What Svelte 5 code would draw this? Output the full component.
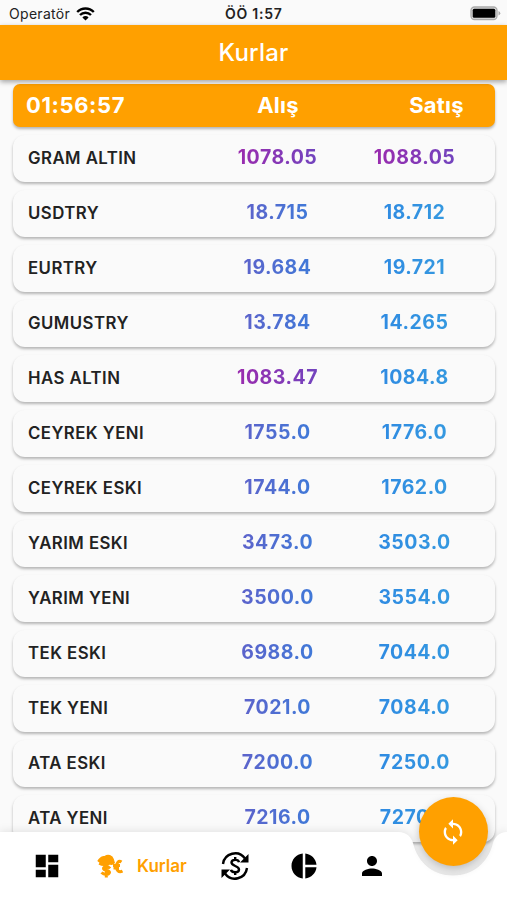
<script>
	const rates = [
		{ name: 'GRAM ALTIN', buy: '1078.05', sell: '1088.05' },
		{ name: 'USDTRY', buy: '18.715', sell: '18.712' },
		{ name: 'EURTRY', buy: '19.684', sell: '19.721' },
		{ name: 'GUMUSTRY', buy: '13.784', sell: '14.265' },
		{ name: 'HAS ALTIN', buy: '1083.47', sell: '1084.8' },
		{ name: 'CEYREK YENI', buy: '1755.0', sell: '1776.0' },
		{ name: 'CEYREK ESKI', buy: '1744.0', sell: '1762.0' },
		{ name: 'YARIM ESKI', buy: '3473.0', sell: '3503.0' },
		{ name: 'YARIM YENI', buy: '3500.0', sell: '3554.0' },
		{ name: 'TEK ESKI', buy: '6988.0', sell: '7044.0' },
		{ name: 'TEK YENI', buy: '7021.0', sell: '7084.0' },
		{ name: 'ATA ESKI', buy: '7200.0', sell: '7250.0' },
		{ name: 'ATA YENI', buy: '7216.0', sell: '7270.0' }
	];
</script>

<div class="screen">
	<div class="status">
		<div class="carrier">
			<span>Operatör</span>
			<svg width="19" height="14" viewBox="0 0 19 14">
				<path d="M1.2 5a11.7 11.7 0 0 1 16.6 0" />
				<path d="M4 8a7.8 7.8 0 0 1 11 0" />
				<path class="fill" d="M9.5 13.5 6.4 10.4a4.4 4.4 0 0 1 6.2 0z" />
			</svg>
		</div>
		<span class="clock">ÖÖ 1:57</span>
		<div class="power">
			<svg width="31" height="15" viewBox="0 0 31 15">
				<rect x="1" y="1" width="26" height="12.5" rx="3.5" fill="#ddd" stroke="#aaa" stroke-width="1.3" />
				<rect x="2.7" y="2.7" width="22.6" height="9.1" rx="1.5" fill="#000" />
				<path d="M28.5 5v4.5q1.8-.8 1.8-2.2T28.5 5z" fill="#aaa" />
			</svg>
		</div>
	</div>

	<header>Kurlar</header>

	<main>
		<div class="row head">
			<span class="time">01:56:57</span>
			<span class="col">Alış</span>
			<span class="col last">Satış</span>
		</div>
		{#each rates as r (r.name)}
			<div class="row card">
				<span class="name">{r.name}</span>
				<span class="value buy" class:wide={r.buy.length > 6}><b>{r.buy}</b></span>
				<span class="value sell" class:wide={r.sell.length > 6}><b>{r.sell}</b></span>
			</div>
		{/each}
	</main>

	<nav>
		<svg class="notch" width="507" height="70" viewBox="0 0 507 70">
			<path
				d="M0 2H398C407 2 411 7 413 13C418 33 433 45.5 453 45.5S488 33 493 13C495 7 499 2 507 2V70H0z"
				fill="#fff"
			/>
		</svg>
		<div class="items">
			<svg class="icon" viewBox="0 0 24 24"
				><path d="M3 13h8V3H3v10zm0 8h8v-6H3v6zm10 0h8V11h-8v10zm0-18v6h8V3h-8z" /></svg
			>
			<div class="active">
				<svg width="26" height="24" viewBox="0 0 26 24">
					<path
						d="M.3 7Q1.5 4.500 3.200 3.500Q4.800 1.500 7.500 2Q10 0 13 1Q16 2 16.800 5L18 9Q15 12 13 10.500Q11 12.500 8 12Q5 12.500 1.500 10.500L2.500 8.800z"
					/>
					<path
						class="line"
						d="M13 14.500C11 12 6 12.500 6.500 15C7 17 12.500 16 12.500 18.500C12 21 7 21 4.500 18.500M9.300 11V23.500"
					/>
					<path
						class="line"
						d="M24.500 8C21.500 6 19.500 9 19.500 12.500S21.500 19 25.500 17M16 11.500H23M16.500 14H22"
					/>
				</svg>
				<span>Kurlar</span>
			</div>
			<svg class="exchange" width="28" height="28" viewBox="0 0 28 28">
				<path d="M2 12A12.2 12.2 0 0 1 24 6.5M26 16A12.2 12.2 0 0 1 4 21.5" />
				<path d="M18 10.3C17.5 7 10.5 7 10.5 10.6S18 13.8 18 17.4S10.5 21 10 17.7M14.2 5V8.5M14.2 19.5V23" />
				<path class="fill" d="M27.5 2V10.5H19zM.5 26V17.5H9z" />
			</svg>
			<svg class="icon pie" viewBox="0 0 24 24"
				><path d="M11 2v20c-5.070-.5-9-4.790-9-10s3.930-9.500 9-10zm2.030 0v8.990H22c-.47-4.740-4.240-8.520-8.970-8.990zm0 11.010V22c4.740-.47 8.500-4.250 8.970-8.990h-8.970z" /></svg
			>
			<svg class="icon" viewBox="0 0 24 24"
				><path d="M12 12c2.210 0 4-1.790 4-4s-1.790-4-4-4-4 1.790-4 4 1.790 4 4 4zm0 2c-2.670 0-8 1.340-8 4v2h16v-2c0-2.660-5.330-4-8-4z" /></svg
			>
		</div>
	</nav>

	<button class="refresh" aria-label="Yenile">
		<svg width="28" height="28" viewBox="0 0 24 24"
			><path d="M12 4V1L8 5l4 4V6c3.310 0 6 2.690 6 6 0 1.010-.25 1.970-.7 2.800l1.460 1.460C19.540 15.030 20 13.570 20 12c0-4.420-3.580-8-8-8zm0 14c-3.310 0-6-2.690-6-6 0-1.010.25-1.970.7-2.800L5.240 7.740C4.460 8.970 4 10.430 4 12c0 4.420 3.580 8 8 8v3l4-4-4-4v3z" /></svg
		>
	</button>
</div>

<style>
	:global(body) {
		overflow: hidden;
	}

	.screen {
		position: relative;
		display: flex;
		flex-direction: column;
		width: 507px;
		height: 900px;
		overflow: hidden;
		background: #fafafa;
		font-family: Inter, 'Liberation Sans', sans-serif;
	}

	.status {
		display: grid;
		grid-template-columns: 216px auto 1fr;
		align-items: center;
		flex: none;
		height: 25px;
		padding: 2px 6px 0 9px;
		box-sizing: border-box;
		font-size: 14px;
		color: #222;
	}

	.carrier {
		display: flex;
		align-items: center;
		gap: 6px;
		letter-spacing: 0.3px;
	}

	.carrier svg {
		fill: none;
		stroke: #000;
		stroke-width: 2.4;
	}

	.carrier .fill {
		fill: #000;
		stroke: none;
	}

	.clock {
		font-weight: 600;
		letter-spacing: 0.75px;
	}

	.power {
		display: flex;
		justify-content: flex-end;
	}

	header {
		z-index: 1;
		flex: none;
		height: 55px;
		line-height: 56px;
		text-align: center;
		font-size: 24px;
		font-weight: 500;
		letter-spacing: 0.2px;
		color: #fff;
		background: #ffa000;
		box-shadow: 0 2px 5px rgba(0, 0, 0, 0.35);
	}

	main {
		display: flex;
		flex-direction: column;
		gap: 8px;
		padding: 4px 12px 0 13px;
	}

	.row {
		display: grid;
		grid-template-columns: 196px 137px 137px 12px;
		align-items: center;
		flex: none;
		box-shadow: 0 2px 3px rgba(0, 0, 0, 0.28);
	}

	.head {
		height: 42.5px;
		border-radius: 7px;
		background: #ffa000;
		color: #fff;
		font-size: 22px;
		font-weight: 700;
	}

	.time {
		padding-left: 13px;
		letter-spacing: 0.6px;
	}

	.col {
		padding-left: 1px;
		text-align: center;
		letter-spacing: 0.2px;
	}

	.last {
		padding-left: 44px;
	}

	.card {
		height: 47px;
		border-radius: 12px;
		background: #fafafa;
	}

	.name {
		padding: 0 0 1px 15px;
		font-size: 16.8px;
		font-weight: 600;
		letter-spacing: 0.45px;
		color: #222;
	}

	.value {
		padding-bottom: 3px;
		text-align: center;
		font-size: 19.5px;
		letter-spacing: 0.5px;
	}

	.value b {
		font-weight: 700;
		color: transparent;
		background: linear-gradient(90deg, #5c63cb, #4079d8);
		background-clip: text;
	}

	.sell b {
		background-image: linear-gradient(90deg, #2f8be2, #3498e0);
	}

	.wide b {
		background-image: linear-gradient(90deg, #9a2bae, #7244be);
	}

	nav {
		position: absolute;
		left: 0;
		bottom: 0;
		width: 507px;
		height: 70px;
	}

	.notch {
		position: absolute;
		filter: drop-shadow(0 0 5px rgba(0, 0, 0, 0.12));
	}

	.items {
		position: relative;
		display: flex;
		align-items: center;
		height: 70px;
		padding: 2px 0 0 32px;
		box-sizing: border-box;
	}

	.icon {
		width: 30px;
		height: 30px;
	}

	.active {
		display: flex;
		align-items: center;
		gap: 14px;
		margin: 0 34px 0 35px;
		font-size: 17px;
		font-weight: 600;
		color: #ffa000;
		fill: #ffa000;
	}

	.line {
		fill: none;
		stroke: #ffa000;
		stroke-width: 3;
	}

	.exchange {
		fill: none;
		stroke: #000;
		stroke-width: 2.4;
	}

	.exchange .fill {
		fill: #000;
		stroke: none;
	}

	.pie {
		margin: 0 38px 0 40px;
	}

	.refresh {
		position: absolute;
		left: 419px;
		top: 797px;
		display: grid;
		place-items: center;
		width: 69px;
		height: 69px;
		padding: 0 1px 0 0;
		border: 0;
		border-radius: 50%;
		background: #ffa000;
		fill: #fff;
		box-shadow: 0 4px 8px rgba(0, 0, 0, 0.25);
	}
</style>
